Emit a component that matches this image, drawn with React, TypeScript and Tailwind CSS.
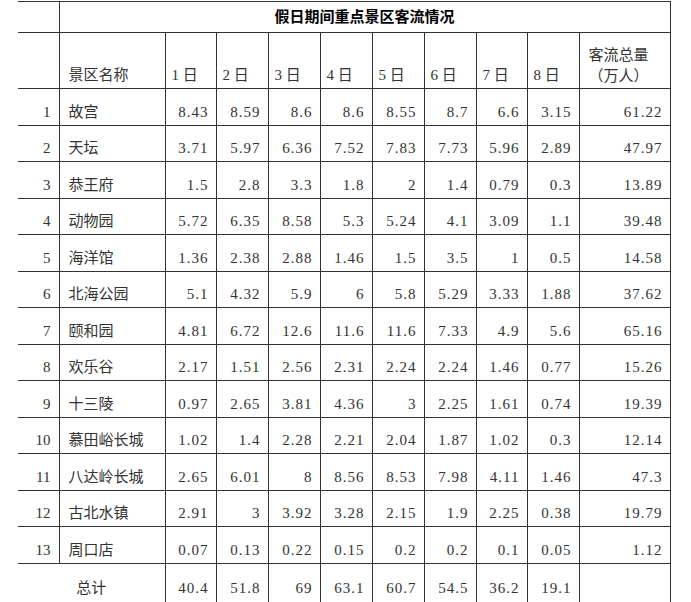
const days = ['1 日', '2 日', '3 日', '4 日', '5 日', '6 日', '7 日', '8 日']

type Row = { no: number; name: string; values: string[]; total: string }

const rows: Row[] = [
  { no: 1, name: '故宫', values: ['8.43', '8.59', '8.6', '8.6', '8.55', '8.7', '6.6', '3.15'], total: '61.22' },
  { no: 2, name: '天坛', values: ['3.71', '5.97', '6.36', '7.52', '7.83', '7.73', '5.96', '2.89'], total: '47.97' },
  { no: 3, name: '恭王府', values: ['1.5', '2.8', '3.3', '1.8', '2', '1.4', '0.79', '0.3'], total: '13.89' },
  { no: 4, name: '动物园', values: ['5.72', '6.35', '8.58', '5.3', '5.24', '4.1', '3.09', '1.1'], total: '39.48' },
  { no: 5, name: '海洋馆', values: ['1.36', '2.38', '2.88', '1.46', '1.5', '3.5', '1', '0.5'], total: '14.58' },
  { no: 6, name: '北海公园', values: ['5.1', '4.32', '5.9', '6', '5.8', '5.29', '3.33', '1.88'], total: '37.62' },
  { no: 7, name: '颐和园', values: ['4.81', '6.72', '12.6', '11.6', '11.6', '7.33', '4.9', '5.6'], total: '65.16' },
  { no: 8, name: '欢乐谷', values: ['2.17', '1.51', '2.56', '2.31', '2.24', '2.24', '1.46', '0.77'], total: '15.26' },
  { no: 9, name: '十三陵', values: ['0.97', '2.65', '3.81', '4.36', '3', '2.25', '1.61', '0.74'], total: '19.39' },
  { no: 10, name: '慕田峪长城', values: ['1.02', '1.4', '2.28', '2.21', '2.04', '1.87', '1.02', '0.3'], total: '12.14' },
  { no: 11, name: '八达岭长城', values: ['2.65', '6.01', '8', '8.56', '8.53', '7.98', '4.11', '1.46'], total: '47.3' },
  { no: 12, name: '古北水镇', values: ['2.91', '3', '3.92', '3.28', '2.15', '1.9', '2.25', '0.38'], total: '19.79' },
  { no: 13, name: '周口店', values: ['0.07', '0.13', '0.22', '0.15', '0.2', '0.2', '0.1', '0.05'], total: '1.12' },
]

const sums = ['40.4', '51.8', '69', '63.1', '60.7', '54.5', '36.2', '19.1']

const cell = 'border border-[#333] align-bottom pb-[4px]'
const num = 'text-right pr-[7px] tracking-[1px]'

export default function App() {
  return (
    <div
      className="min-h-screen bg-white pl-[18px] pt-px text-[15px] leading-[18px] text-[#333]"
      style={{ fontFamily: '"Liberation Serif", "Noto Sans CJK SC", serif' }}
    >
      <table className="table-fixed border-collapse w-[652px]">
        <colgroup>
          <col className="w-[41px]" />
          <col className="w-[106px]" />
          <col className="w-[51px]" />
          <col className="w-[52px]" />
          <col className="w-[52px]" />
          <col className="w-[52px]" />
          <col className="w-[52px]" />
          <col className="w-[52px]" />
          <col className="w-[51px]" />
          <col className="w-[52px]" />
          <col className="w-[91px]" />
        </colgroup>
        <tbody>
          {/* title */}
          <tr className="h-[31px]">
            <td className="border border-[#333] border-l-0" />
            <td
              colSpan={10}
              className="border border-[#333] text-center align-middle font-bold text-black"
            >
              假日期间重点景区客流情况
            </td>
          </tr>

          {/* header */}
          <tr className="h-[56px]">
            <td className={`${cell} border-l-0`} />
            <td className={`${cell} pl-[9px]`}>景区名称</td>
            {days.map(d => (
              <td key={d} className={`${cell} pl-[6px] whitespace-nowrap`}>
                {d}
              </td>
            ))}
            <td className="border border-[#333] align-top pt-[12px] pl-[9px] leading-[21px]">
              客流总量
              <br />
              （万人）
            </td>
          </tr>

          {rows.map(r => (
            <tr key={r.no} className="h-[36.5px]">
              <td className={`${cell} border-l-0 text-right pr-[8px]`}>{r.no}</td>
              <td className={`${cell} pl-[9px] whitespace-nowrap`}>{r.name}</td>
              {r.values.map((v, i) => (
                <td key={i} className={`${cell} ${num}`}>
                  {v}
                </td>
              ))}
              <td className={`${cell} ${num}`}>{r.total}</td>
            </tr>
          ))}

          {/* total */}
          <tr className="h-[40px]">
            <td colSpan={2} className="border border-[#333] border-l-0 border-b-0 text-center align-bottom pb-[6px]">
              总计
            </td>
            {sums.map((s, i) => (
              <td key={i} className={`border border-[#333] border-b-0 align-bottom pb-[6px] ${num}`}>
                {s}
              </td>
            ))}
            <td className="border border-[#333] border-b-0" />
          </tr>
        </tbody>
      </table>
    </div>
  )
}
